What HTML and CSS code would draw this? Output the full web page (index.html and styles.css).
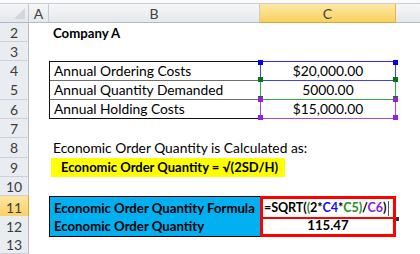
FILE: index.html
```html
<!DOCTYPE html>
<html>
<head>
<meta charset="utf-8">
<link rel="stylesheet" href="styles.css">
</head>
<body>
<div class="sheet">
  <div class="topstrip"></div>
  <div class="row hdr">
    <div class="corner"><span class="tri"></span></div>
    <div class="ch">A</div>
    <div class="ch">B</div>
    <div class="ch ch-sel">C</div>
    <div class="ch ch-last"></div>
  </div>
  <div class="row h19">
    <div class="rh">2</div><div></div>
    <div class="cell bold">Company A</div><div></div><div></div>
  </div>
  <div class="row h19">
    <div class="rh">3</div><div></div><div></div><div></div><div></div>
  </div>
  <div class="row h19">
    <div class="rh">4</div><div></div>
    <div class="cell tb tb-top">Annual Ordering Costs</div>
    <div class="cell num ref ref-blue">$20,000.00<i class="sq tl"></i><i class="sq tr"></i><i class="sq bl"></i><i class="sq br"></i></div>
    <div></div>
  </div>
  <div class="row h20">
    <div class="rh">5</div><div></div>
    <div class="cell tb">Annual Quantity Demanded</div>
    <div class="cell num ref ref-green">5000.00<i class="sq tl"></i><i class="sq tr"></i><i class="sq bl"></i><i class="sq br"></i></div>
    <div></div>
  </div>
  <div class="row h19">
    <div class="rh">6</div><div></div>
    <div class="cell tb tb-bot">Annual Holding Costs</div>
    <div class="cell num ref ref-purple">$15,000.00<i class="sq tl"></i><i class="sq tr"></i><i class="sq bl"></i><i class="sq br"></i></div>
    <div></div>
  </div>
  <div class="row h19">
    <div class="rh">7</div><div></div><div></div><div></div><div></div>
  </div>
  <div class="row h20">
    <div class="rh">8</div><div></div>
    <div class="cell over">Economic Order Quantity is Calculated as:</div><div></div><div></div>
  </div>
  <div class="row h19">
    <div class="rh">9</div><div></div>
    <div class="cell-plain over"><span class="hl">Economic Order Quantity = √(2SD/H)</span></div><div></div><div></div>
  </div>
  <div class="row h19">
    <div class="rh">10</div><div></div><div></div><div></div><div></div>
  </div>
  <div class="row h20">
    <div class="rh rh-sel">11</div><div></div>
    <div class="cell bold blue blue-top">Economic Order Quantity Formula</div>
    <div class="cell red red-top"><span class="f"><span>=SQRT(</span><span class="g">(</span><span>2*</span><span class="b">C4</span><span>*</span><span class="g">C5</span><span class="g">)</span><span>/</span><span class="p">C6</span><span>)</span></span><span class="caret"></span><i class="handle"></i></div>
    <div></div>
  </div>
  <div class="row h19">
    <div class="rh">12</div><div></div>
    <div class="cell bold blue blue-bot">Economic Order Quantity</div>
    <div class="cell num bold red red-bot">115.47</div>
    <div></div>
  </div>
  <div class="row h19">
    <div class="rh">13</div><div></div><div></div><div></div><div></div>
  </div>
</div>
</body>
</html>
```
FILE: styles.css
```css
* { box-sizing: border-box; }
html, body { margin: 0; padding: 0; background: #fff; }
body {
  font-family: Lato, "Liberation Sans", sans-serif;
  font-size: 13.8px;
  color: #000;
}
.sheet { width: 420px; height: 254px; overflow: hidden; }
.topstrip { height: 4px; background: #fbfbfc; border-bottom: 1px solid #c9cdd3; }
.row {
  display: grid;
  grid-template-columns: 29px 20px 211px 136px 24px;
}
.hdr { height: 19px; }
.h19 { height: 19px; }
.h20 { height: 20px; }

.corner {
  position: relative;
  background: linear-gradient(#f4f5f7, #e4e7eb);
  border-right: 1px solid #c3c7cd;
  border-bottom: 1px solid #b4b8be;
}
.tri {
  position: absolute;
  right: 3px; bottom: 3px;
  width: 0; height: 0;
  border-left: 11px solid transparent;
  border-bottom: 11px solid #d2d5da;
}
.ch {
  display: flex; align-items: center; justify-content: center;
  background: linear-gradient(#f6f7f9, #e5e8ec);
  border-right: 1px solid #c8ccd2;
  border-bottom: 1px solid #b4b8be;
  color: #404040;
  font-size: 14px;
}
.ch-sel {
  background: linear-gradient(#fde9a6, #f8d05f);
  border-right: 1px solid #e2b24c;
  border-bottom: 1px solid #d9a63a;
  color: #404040;
}
.ch-last { border-right: none; }
.rh {
  display: flex; align-items: center; justify-content: center;
  background: #e9ecf0;
  border-right: 1px solid #b9bdc3;
  border-bottom: 1px solid #cdd1d7;
  color: #3c3c3c;
  font-size: 14px;
}
.rh-sel {
  background: linear-gradient(#fde6a0, #f8d060);
  border-bottom: 1px solid #e2b24c;
  border-right: 1px solid #d9a63a;
}
.cell {
  position: relative;
  display: flex; align-items: center;
  padding-left: 4px;
  white-space: nowrap;
  line-height: 18px;
}
.cell-plain { position: relative; white-space: nowrap; }
.over { overflow: visible; }
.bold { font-weight: bold; font-size: 13.2px; }
.num { justify-content: center; padding-left: 0; }

.tb { border-left: 1px solid #111; border-bottom: 1px solid #6f6f6f; }
.tb-top { border-top: 1px solid #111; }
.tb-bot { border-bottom: 1px solid #111; }

.ref { border: 1px solid; }
.ref-blue { border-color: #4040ff; border-top-color: #2a2aff; }
.ref-green { border-color: #3da33d; border-top: none; }
.ref-purple { border-color: #a24ae6; border-top: none; }
.sq { position: absolute; width: 5px; height: 5px; }
.ref-blue .sq { background: #0000f0; }
.ref-green .sq { background: #007a10; }
.ref-purple .sq { background: #9a1fd9; }
.sq.tl { left: -3px; top: -2px; }
.sq.tr { right: -3px; top: -2px; }
.sq.bl { left: -3px; bottom: -2px; }
.sq.br { right: -3px; bottom: -2px; }
.ref-green .sq.tl, .ref-green .sq.tr,
.ref-purple .sq.tl, .ref-purple .sq.tr { top: -3px; }

.hl {
  position: absolute;
  left: 2px; top: 0;
  width: 234px; height: 19px;
  background: #ffff00;
  font-weight: bold;
  font-size: 13px;
  padding-left: 10px;
  line-height: 19px;
}

.blue { background: #00b0f0; border-left: 1px solid #000; border-bottom: 1px solid #000; }
.blue-top { border-top: 1px solid #000; }

.red { border-left: 3px solid #ff0000; border-right: 3px solid #ff0000; }
.red-top { border-top: 3px solid #ff0000; border-bottom: 2px solid #ff0000; padding-left: 1px; }
.red-bot { border-bottom: 3px solid #ff0000; }
.f { font-weight: bold; font-size: 12.6px; letter-spacing: -0.1px; }
.g { color: #1f8f1f; }
.b { color: #1010ee; }
.p { color: #8a22d8; }
.caret { display: inline-block; width: 1px; height: 15px; background: #555; margin-left: 2px; flex: none; }
.handle {
  position: absolute;
  right: -6px; bottom: -4px;
  width: 4px; height: 4px;
  background: #333;
}
```
